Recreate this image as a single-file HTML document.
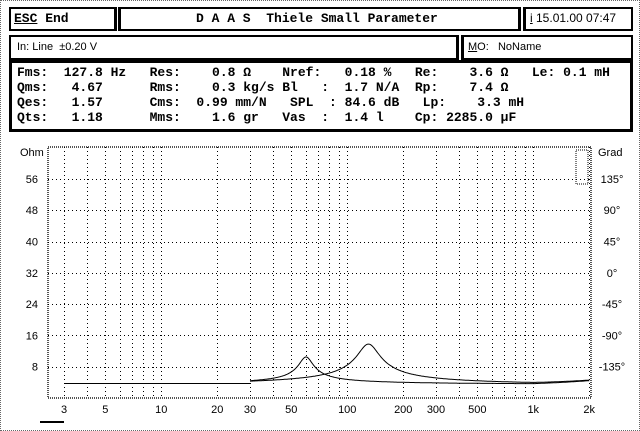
<!DOCTYPE html>
<html><head><meta charset="utf-8"><style>
body{margin:0;background:#fff;width:640px;height:431px;overflow:hidden;position:relative;font-family:"Liberation Mono",monospace;}
.b{position:absolute;border:2px solid #000;box-sizing:border-box;}
.t{position:absolute;font-weight:bold;font-size:13px;line-height:14px;white-space:pre;color:#000;}
.s{position:absolute;font-family:"Liberation Sans",sans-serif;font-size:11px;line-height:12px;white-space:pre;color:#000;}
</style></head><body>
<div style="position:absolute;left:0;top:0;width:640px;height:431px;border:1px dotted #666;box-sizing:border-box"></div>
<div class="b" style="left:9px;top:7px;width:108px;height:24px;border-right-width:3px"></div>
<div class="b" style="left:118px;top:7px;width:403px;height:24px;border-left-width:3px;border-right-width:3px"></div>
<div class="b" style="left:523px;top:7px;width:110px;height:24px;border-left-width:3px"></div>
<div class="b" style="left:9px;top:35px;width:450px;height:25px;border-right-width:3px"></div>
<div class="b" style="left:461px;top:35px;width:172px;height:25px;border-left-width:3px"></div>
<div class="b" style="left:9px;top:60px;width:624px;height:72px;border-width:3px"></div>
<div class="t" style="left:14px;top:12px"><u>ESC</u> End</div>
<div class="t" style="left:196px;top:12px">D A A S  Thiele Small Parameter</div>
<div class="s" style="left:530px;top:12px;font-size:12px"><u>i</u> 15.01.00 07:47</div>
<div class="s" style="left:17px;top:41px">In: Line  ±0.20 V</div>
<div class="s" style="left:468px;top:41px"><u>M</u>O:   NoName</div>
<div class="t" style="left:17px;top:66px">Fms:  127.8 Hz   Res:    0.8 Ω    Nref:   0.18 %   Re:    3.6 Ω   Le: 0.1 mH</div>
<div class="t" style="left:17px;top:81px">Qms:   4.67      Rms:    0.3 kg/s Bl   :  1.7 N/A  Rp:    7.4 Ω</div>
<div class="t" style="left:17px;top:96px">Qes:   1.57      Cms:  0.99 mm/N   SPL  : 84.6 dB   Lp:    3.3 mH</div>
<div class="t" style="left:17px;top:111px">Qts:   1.18      Mms:    1.6 gr   Vas  :  1.4 l    Cp: 2285.0 µF</div>
<svg id="g" width="640" height="431" style="position:absolute;left:0;top:0" xmlns="http://www.w3.org/2000/svg" font-family="Liberation Sans,sans-serif" font-size="11"></svg>
<script>
var s='',X=function(f){return 64+186*Math.log10(f/3)};
var L=48,R=591,T=147,B=398;
s+='<rect x="'+L+'" y="'+T+'" width="'+(R-L)+'" height="'+(B-T)+'" fill="none" stroke="#555" stroke-width="2" stroke-dasharray="1 1"/>';
var fs=[3,4,5,6,7,8,9,10,20,30,40,50,60,70,80,90,100,200,300,400,500,600,700,800,900,1000,2000];
fs.forEach(function(f){var x=Math.round(X(f))+.5;s+='<line x1="'+x+'" y1="'+T+'" x2="'+x+'" y2="'+B+'" stroke="#000" stroke-dasharray="1 3"/>';});
var ol=['Ohm','56','48','40','32','24','16','8'],gl=['Grad','135°','90°','45°','0°','-45°','-90°','-135°'];
for(var i=1;i<8;i++){var y=Math.round(B-(8-i)*31.3)+.5;s+='<line x1="'+L+'" y1="'+y+'" x2="'+R+'" y2="'+y+'" stroke="#000" stroke-dasharray="1 3"/>';}
for(var i=0;i<8;i++){var y=(i==0?152:B-(8-i)*31.3)+4;s+='<text x="'+(i==0?20:38)+'" y="'+y+'" text-anchor="'+(i==0?'start':'end')+'">'+ol[i]+'</text>';s+='<text x="'+(i==0?598:612)+'" y="'+y+'" text-anchor="'+(i==0?'start':'middle')+'">'+gl[i]+'</text>';}
[[3,'3'],[5,'5'],[10,'10'],[20,'20'],[30,'30'],[50,'50'],[100,'100'],[200,'200'],[300,'300'],[500,'500'],[1000,'1k'],[2000,'2k']].forEach(function(a){s+='<text x="'+X(a[0])+'" y="413" text-anchor="middle">'+a[1]+'</text>';});
function curve(f0,Rr,Q,fmin){var p='';for(var f=fmin;f<=2000;f*=1.01){var z=3.6+Rr/Math.sqrt(1+Q*Q*Math.pow(f/f0-f0/f,2));if(f>1000)z+=(f-1000)/1000*0.8;var y=B-z*3.91;p+=(p?'L':'M')+X(f).toFixed(1)+','+y.toFixed(1);}return '<path d="'+p+'" fill="none" stroke="#000" stroke-width="1"/>';}
s+='<line x1="64" y1="383.5" x2="250" y2="383.5" stroke="#000"/>';
s+=curve(130,10.2,3.5,30);s+=curve(60,6.9,5.5,30);
s+='<rect x="40" y="421" width="24" height="2" fill="#000"/>';
s+='<rect x="576" y="150" width="12" height="34" fill="none" stroke="#000" stroke-dasharray="1 1"/>';
document.getElementById('g').innerHTML=s;
</script>
</body></html>
